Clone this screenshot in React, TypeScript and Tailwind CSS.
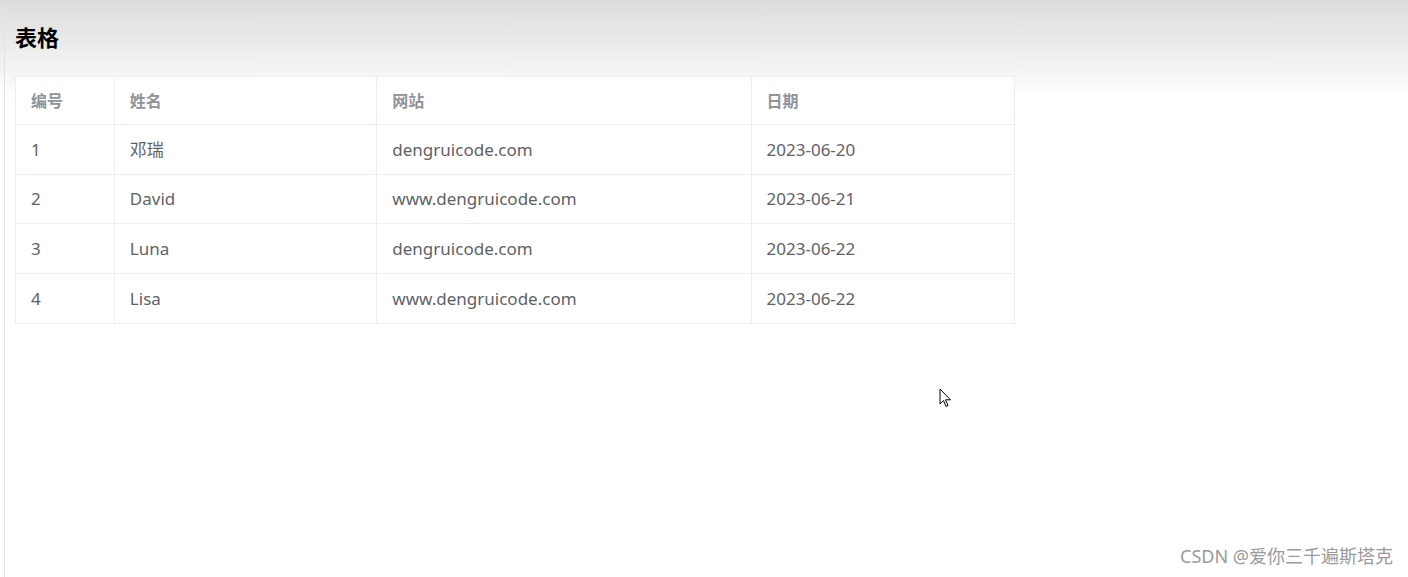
export default function App() {
  const rows = [
    ["1", "邓瑞", "dengruicode.com", "2023-06-20"],
    ["2", "David", "www.dengruicode.com", "2023-06-21"],
    ["3", "Luna", "dengruicode.com", "2023-06-22"],
    ["4", "Lisa", "www.dengruicode.com", "2023-06-22"],
  ];
  const widths = ["w-[99px]", "w-[263px]", "w-[375px]", "w-[263px]"];
  return (
    <div className="relative w-[1408px] h-[577px] overflow-hidden bg-white" style={{ fontFamily: '"Noto Sans", "Noto Sans CJK SC", sans-serif' }}>
      <div className="absolute inset-x-0 top-0 h-[100px] bg-gradient-to-b from-[#dcdcdc] to-white" />
      <div className="absolute left-[4px] top-[2px] bottom-0 w-px bg-[#e2e2e2]" />
      <div className="relative pl-[15px] pt-[22px]">
        <h1 className="text-[22px] font-bold text-black leading-[30px]">表格</h1>
        <div className="mt-[24px] w-[1000px] border border-[#ebeef5] bg-white/70">
          <div className="flex h-[48px] border-b border-[#ebeef5] bg-white/60">
            {["编号", "姓名", "网站", "日期"].map((h, i) => (
              <div key={h} className={`${widths[i]} flex items-center px-[15px] text-[16px] font-bold text-[#909399] ${i < 3 ? "border-r border-[#ebeef5]" : ""}`}>{h}</div>
            ))}
          </div>
          {rows.map((r, ri) => (
            <div key={ri} className={`flex h-[49.5px] ${ri < 3 ? "border-b border-[#ebeef5]" : ""}`}>
              {r.map((c, i) => (
                <div key={i} className={`${widths[i]} flex items-center px-[15px] text-[17px] text-[#606266] ${i < 3 ? "border-r border-[#ebeef5]" : ""}`}>{c}</div>
              ))}
            </div>
          ))}
        </div>
      </div>
      <svg className="absolute left-[939px] top-[388px]" width="13" height="20" viewBox="0 0 13 20">
        <path d="M1 1 L1 16 L4.5 12.5 L7 18.5 L9 17.5 L6.5 11.8 L11.5 11.8 Z" fill="white" stroke="black" strokeWidth="1" />
      </svg>
      <div className="absolute right-[15px] bottom-[7px] text-[18px] text-[#9a9a9a]">CSDN @爱你三千遍斯塔克</div>
    </div>
  );
}
